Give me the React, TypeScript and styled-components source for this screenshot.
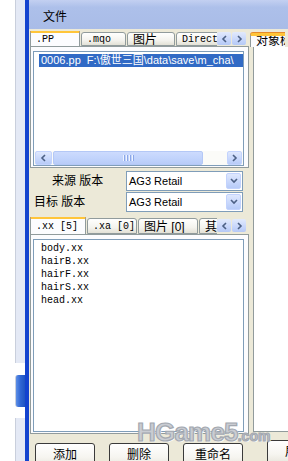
import styled, { createGlobalStyle } from "styled-components";

const GlobalStyle = createGlobalStyle`
  html, body {
    margin: 0;
    padding: 0;
    background: #fff;
    overflow: hidden;
  }
  #root {
    width: 288px;
    height: 461px;
  }
  * {
    box-sizing: border-box;
  }
`;

const cjk = `"Liberation Sans", "Noto Sans CJK SC", sans-serif`;
const mono = `"Liberation Mono", "Noto Sans CJK SC", monospace`;

const Screen = styled.div`
  position: relative;
  width: 288px;
  height: 461px;
  display: flex;
  overflow: hidden;
  background: #fff;
  font-family: ${cjk};
`;

const SideStrip = styled.div`
  width: 25px;
  flex: none;
  padding-left: 15px;
  display: flex;
  flex-direction: column;
`;

const StripPiece = styled.div<{ $kind: "lav" | "gap" | "tab"; $h?: number }>`
  height: ${({ $h }) => ($h ? `${$h}px` : "auto")};
  flex: ${({ $h }) => ($h ? "none" : "1")};
  border-left: 1px solid ${({ $kind }) => ($kind === "gap" ? "#fff" : "#c9cfdc")};
  background: ${({ $kind }) =>
    $kind === "lav"
      ? "#e4e9f5"
      : $kind === "gap"
      ? "#fff"
      : "linear-gradient(90deg, #5d8fe6 0%, #2f66d4 50%, #1f54c2 100%)"};
  border-radius: ${({ $kind }) => ($kind === "tab" ? "3px 0 0 3px" : "0")};
`;

const Window = styled.div`
  flex: 1;
  display: flex;
  flex-direction: column;
  border-left: 4px solid #1343cf;
  background: #ece9d8;
  min-width: 0;
`;

const MenuBar = styled.div`
  height: 29px;
  flex: none;
  padding: 10px 0 0 14px;
  background: linear-gradient(180deg, #c3d0f1 0%, #adc0ea 25%, #a9bce7 100%);
  font-size: 12px;
  line-height: 14px;
  color: #000;
`;

const Main = styled.div`
  flex: 1;
  display: flex;
  padding-top: 2px;
  min-height: 0;
`;

const LeftPane = styled.div`
  width: 220px;
  flex: none;
  padding-left: 1px;
  display: flex;
  flex-direction: column;
`;

const RightPane = styled.div`
  flex: 1;
  min-width: 0;
  padding: 1px 0 0 4px;
  display: flex;
  flex-direction: column;
  overflow: hidden;
`;

const TabStrip = styled.div<{ $h: number; $flat?: boolean }>`
  height: ${({ $h }) => $h}px;
  flex: none;
  display: flex;
  align-items: flex-end;
  border-bottom: ${({ $flat }) => ($flat ? "none" : "1px solid #919b9c")};
  padding-right: 3px;
`;

const TabList = styled.div<{ $shift?: number }>`
  flex: 1;
  display: flex;
  align-items: flex-end;
  gap: 1px;
  height: 100%;
  overflow: hidden;
  margin-left: ${({ $shift }) => $shift ?? 0}px;
`;

const Tab = styled.div<{ $active?: boolean; $w: number; $h: number; $cjk?: boolean }>`
  flex: none;
  width: ${({ $w }) => $w}px;
  height: ${({ $h, $active }) => ($active ? $h + 1 : $h - 2)}px;
  margin-bottom: ${({ $active }) => ($active ? "-1px" : "0")};
  border: 1px solid #919b9c;
  border-bottom: ${({ $active }) => ($active ? "none" : "1px solid #919b9c")};
  border-top: ${({ $active }) => ($active ? "3px solid #ffc53a" : "1px solid #919b9c")};
  box-shadow: ${({ $active }) => ($active ? "0 -1px 0 #e68b2c" : "none")};
  border-radius: 3px 3px 0 0;
  background: ${({ $active }) =>
    $active ? "#fcfcfe" : "linear-gradient(180deg, #fffffe 0%, #f4f3ee 60%, #e3e1d6 100%)"};
  padding-left: 5px;
  font-family: ${({ $cjk }) => ($cjk ? cjk : mono)};
  font-size: ${({ $cjk }) => ($cjk ? "12px" : "10px")};
  line-height: ${({ $h, $active }) => ($active ? $h - 3 : $h - 2)}px;
  white-space: nowrap;
  overflow: hidden;
  color: #000;
`;

const ArrowGroup = styled.div`
  flex: none;
  display: flex;
  gap: 1px;
  align-self: center;
`;

const ArrowBtn = styled.div`
  width: 14px;
  height: 13px;
  border-radius: 2px;
  background: linear-gradient(180deg, #e2eafc 0%, #c7d6fb 60%, #b5c9f6 100%);
  display: flex;
  align-items: center;
  justify-content: center;
`;

const Page = styled.div<{ $h: number }>`
  height: ${({ $h }) => $h}px;
  flex: none;
  width: 219px;
  border: 1px solid #919b9c;
  border-top: none;
  background: #fcfcfe;
  padding: 4px 4px 1px 2px;
  display: flex;
`;

const ListBox = styled.div<{ $pad?: number }>`
  flex: 1;
  min-width: 0;
  border: 1px solid #7f9db9;
  background: #fff;
  display: flex;
  flex-direction: column;
  overflow: hidden;
  padding-top: ${({ $pad }) => $pad ?? 0}px;
`;

const SelectedRow = styled.div`
  margin: 1px 0 0 5px;
  height: 13px;
  padding-left: 2px;
  background: #316ac5;
  color: #fff;
  font-size: 11px;
  line-height: 13px;
  white-space: nowrap;
  overflow: hidden;
`;

const Spacer = styled.div<{ $h?: number }>`
  flex: ${({ $h }) => ($h ? "none" : "1")};
  height: ${({ $h }) => ($h ? `${$h}px` : "auto")};
`;

const HScroll = styled.div`
  height: 14px;
  flex: none;
  display: flex;
  gap: 1px;
  padding: 0 1px;
  background: #fbfbf8;
`;

const ScrollBtn = styled.div<{ $w: number }>`
  width: ${({ $w }) => $w}px;
  flex: none;
  border: 1px solid #c3d3fd;
  border-radius: 2px;
  background: linear-gradient(180deg, #dfe8fd 0%, #c9d8fc 55%, #b7cbf8 100%);
  display: flex;
  align-items: center;
  justify-content: center;
`;

const Thumb = styled.div`
  width: 150px;
  flex: none;
  border: 1px solid #b4c8f6;
  border-radius: 2px;
  background: linear-gradient(180deg, #cddbfd 0%, #c2d4fc 50%, #b8cbf8 100%);
  display: flex;
  align-items: center;
  justify-content: center;
  gap: 1px;
`;

const Grip = styled.span`
  width: 1px;
  height: 6px;
  background: #eef3fe;
  box-shadow: 1px 0 0 #8ca8e8;
  margin-right: 1px;
`;

const Settings = styled.div`
  height: 49px;
  flex: none;
  padding-top: 3px;
  display: flex;
  flex-direction: column;
  gap: 1px;
`;

const SettingRow = styled.div`
  display: flex;
  align-items: center;
  height: 20px;
`;

const Label = styled.div<{ $indent: number }>`
  width: 96px;
  flex: none;
  padding-left: ${({ $indent }) => $indent}px;
  font-size: 12px;
  line-height: 14px;
  white-space: nowrap;
  color: #000;
`;

const Combo = styled.div`
  width: 117px;
  height: 20px;
  border: 1px solid #7f9db9;
  background: #fff;
  display: flex;
  align-items: center;
  padding: 0 1px 0 2px;
  font-size: 11px;
  color: #000;
`;

const ComboText = styled.span`
  flex: 1;
`;

const DropBtn = styled(ScrollBtn)`
  height: 16px;
`;

const FileList = styled.div`
  padding: 2px 0 0 7px;
  font-family: ${mono};
  font-size: 10px;
  line-height: 13px;
  color: #000;
`;

const ButtonRow = styled.div<{ $indent: number; $top?: number }>`
  flex: none;
  display: flex;
  gap: 14px;
  padding-left: ${({ $indent }) => $indent}px;
  margin-top: ${({ $top }) => $top ?? 0}px;
`;

const Button = styled.div`
  width: 60px;
  height: 24px;
  flex: none;
  border: 1px solid #3a3a3a;
  border-radius: 3px;
  background: linear-gradient(180deg, #ffffff 0%, #f6f5f0 60%, #e8e6dc 100%);
  text-align: center;
  font-size: 12px;
  line-height: 14px;
  padding-top: 4px;
  color: #000;
`;

const TreePage = styled.div`
  height: 385px;
  flex: none;
  border: 1px solid #919b9c;
  border-top: none;
  border-right: none;
  background: #fff;
`;

const Watermark = styled.div`
  position: absolute;
  left: 137px;
  top: 417px;
  font-family: "Liberation Sans", sans-serif;
  font-weight: bold;
  color: #c9ccd2;
  -webkit-text-stroke: 1.2px #a3a8b0;
  text-shadow: 1px 1px 0 #fff;
  white-space: nowrap;
  pointer-events: none;
`;

const MarkBig = styled.span`
  font-size: 26px;
  letter-spacing: -0.8px;
`;

const MarkSmall = styled.span`
  font-size: 14px;
`;

function Chevron({ dir }: { dir: "left" | "right" | "down" }) {
  const d =
    dir === "left" ? "M5 1 L2 4 L5 7" : dir === "right" ? "M2 1 L5 4 L2 7" : "M1 2 L4 5 L7 2";
  return (
    <svg width={dir === "down" ? 8 : 7} height={8} viewBox={dir === "down" ? "0 0 8 8" : "0 0 7 8"}>
      <path d={d} fill="none" stroke="#4d6185" strokeWidth={1.6} />
    </svg>
  );
}

function TabArrows() {
  return (
    <ArrowGroup>
      <ArrowBtn>
        <Chevron dir="left" />
      </ArrowBtn>
      <ArrowBtn>
        <Chevron dir="right" />
      </ArrowBtn>
    </ArrowGroup>
  );
}

const files = ["body.xx", "hairB.xx", "hairF.xx", "hairS.xx", "head.xx"];

export default function App() {
  return (
    <Screen>
      <GlobalStyle />
      <SideStrip>
        <StripPiece $kind="lav" $h={363} />
        <StripPiece $kind="gap" $h={12} />
        <StripPiece $kind="tab" $h={32} />
        <StripPiece $kind="gap" $h={11} />
        <StripPiece $kind="lav" />
      </SideStrip>
      <Window>
        <MenuBar>文件</MenuBar>
        <Main>
          <LeftPane>
            <TabStrip $h={16}>
              <TabList>
                <Tab $active $w={50} $h={16}>.PP</Tab>
                <Tab $w={45} $h={16}>.mqo</Tab>
                <Tab $w={48} $h={16} $cjk>图片</Tab>
                <Tab $w={50} $h={16}>Direct</Tab>
              </TabList>
              <TabArrows />
            </TabStrip>
            <Page $h={121}>
              <ListBox $pad={1}>
                <SelectedRow>0006.pp&nbsp;&nbsp;F:\傲世三国\data\save\m_cha\</SelectedRow>
                <Spacer />
                <HScroll>
                  <ScrollBtn $w={17}>
                    <Chevron dir="left" />
                  </ScrollBtn>
                  <Thumb>
                    <Grip />
                    <Grip />
                    <Grip />
                    <Grip />
                  </Thumb>
                  <Spacer />
                  <ScrollBtn $w={15}>
                    <Chevron dir="right" />
                  </ScrollBtn>
                </HScroll>
              </ListBox>
            </Page>
            <Settings>
              <SettingRow>
                <Label $indent={22}>来源 版本</Label>
                <Combo>
                  <ComboText>AG3 Retail</ComboText>
                  <DropBtn $w={15}>
                    <Chevron dir="down" />
                  </DropBtn>
                </Combo>
              </SettingRow>
              <SettingRow>
                <Label $indent={4}>目标 版本</Label>
                <Combo>
                  <ComboText>AG3 Retail</ComboText>
                  <DropBtn $w={15}>
                    <Chevron dir="down" />
                  </DropBtn>
                </Combo>
              </SettingRow>
            </Settings>
            <TabStrip $h={18}>
              <TabList>
                <Tab $active $w={56} $h={18}>.xx [5]</Tab>
                <Tab $w={50} $h={18}>.xa [0]</Tab>
                <Tab $w={60} $h={18} $cjk>图片 [0]</Tab>
                <Tab $w={40} $h={18} $cjk>其</Tab>
              </TabList>
              <TabArrows />
            </TabStrip>
            <Page $h={199}>
              <ListBox>
                <FileList>
                  {files.map((f) => (
                    <div key={f}>{f}</div>
                  ))}
                </FileList>
              </ListBox>
            </Page>
            <Spacer $h={9} />
            <ButtonRow $indent={5}>
              <Button>添加</Button>
              <Button>删除</Button>
              <Button>重命名</Button>
            </ButtonRow>
          </LeftPane>
          <RightPane>
            <TabStrip $h={15} $flat>
              <TabList $shift={-3}>
                <Tab $active $w={60} $h={14} $cjk>对象树</Tab>
              </TabList>
            </TabStrip>
            <TreePage />
            <ButtonRow $indent={14} $top={8}>
              <Button>展开</Button>
            </ButtonRow>
          </RightPane>
        </Main>
      </Window>
      <Watermark>
        <MarkBig>HGame5</MarkBig>
        <MarkSmall>.com</MarkSmall>
      </Watermark>
    </Screen>
  );
}
